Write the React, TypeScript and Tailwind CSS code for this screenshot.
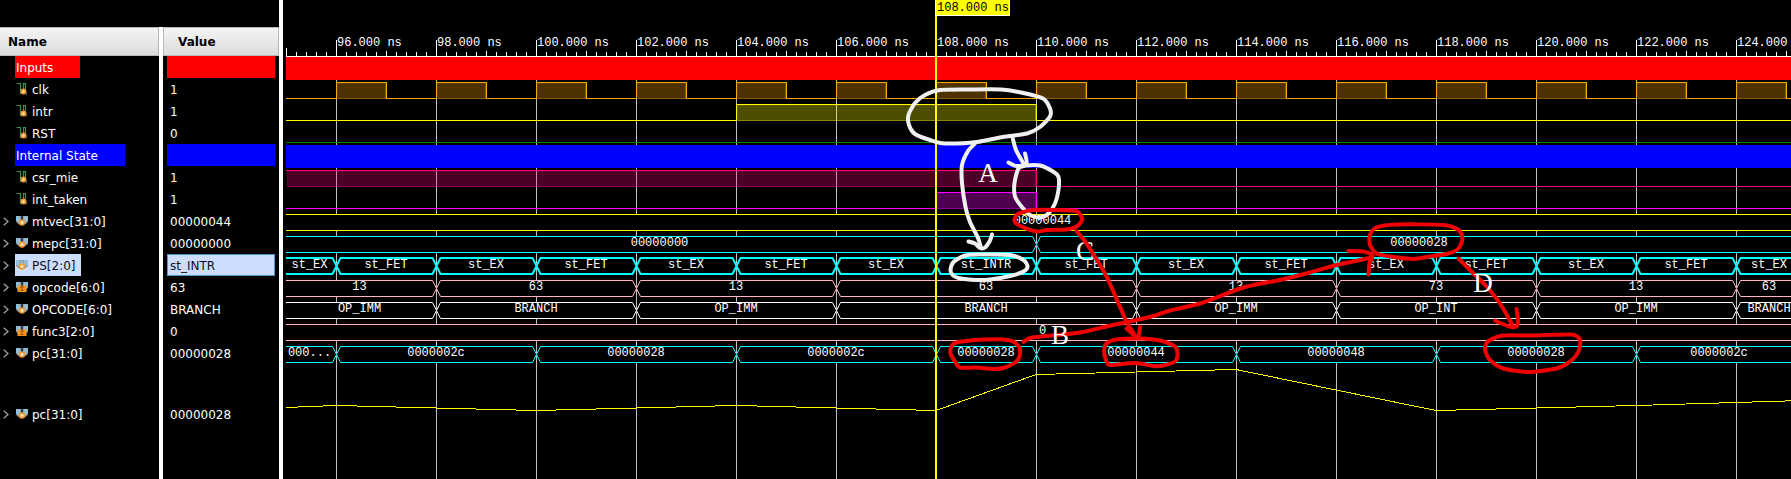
import React from "react";

type IconKind = "wire" | "bus" | "param" | "none";
type Signal = {
  name: string;
  value: string;
  icon: IconKind;
  band?: "red" | "blue";
  selected?: boolean;
  tall?: boolean;
};

const SIGNALS: Signal[] = [
  { name: "Inputs", value: "", icon: "none", band: "red" },
  { name: "clk", value: "1", icon: "wire" },
  { name: "intr", value: "1", icon: "wire" },
  { name: "RST", value: "0", icon: "wire" },
  { name: "Internal State", value: "", icon: "none", band: "blue" },
  { name: "csr_mie", value: "1", icon: "wire" },
  { name: "int_taken", value: "1", icon: "wire" },
  { name: "mtvec[31:0]", value: "00000044", icon: "bus" },
  { name: "mepc[31:0]", value: "00000000", icon: "bus" },
  { name: "PS[2:0]", value: "st_INTR", icon: "bus", selected: true },
  { name: "opcode[6:0]", value: "63", icon: "param" },
  { name: "OPCODE[6:0]", value: "BRANCH", icon: "bus" },
  { name: "func3[2:0]", value: "0", icon: "param" },
  { name: "pc[31:0]", value: "00000028", icon: "bus" },
  { name: "pc[31:0]", value: "00000028", icon: "bus", tall: true },
];

function SignalIcon({ kind }: { kind: IconKind }) {
  if (kind === "none") return null;
  if (kind === "wire") {
    return (
      <svg className="h-3 w-3 shrink-0" viewBox="0 0 12 12" aria-hidden="true">
        <path d="M0.5 0.5H4.5V10.5H6M7.5 6V0.5H9.5V6" fill="none" stroke="#3b9048" strokeWidth="1.2" />
        <circle cx="7.5" cy="8.5" r="3" fill="#f0962d" />
        <path d="M7.5 7L9 8.5L7.5 10L6 8.5Z" fill="#fff0d0" />
        <path d="M10.5 8V11.5" stroke="#5b5b5b" />
      </svg>
    );
  }
  return (
    <svg className="h-3 w-3 shrink-0" viewBox="0 0 12 12" aria-hidden="true">
      <path d="M0 1H5V5L3.5 8.5H2L0 6Z" fill="#93bdd3" />
      <path d="M7 1H12V6L10 8.5H8.5L7 5Z" fill="#93bdd3" />
      <path d="M0 6L2 8.5H4M12 6L10 8.5H8M5 1V4M7 1V4" stroke="#6d7f89" fill="none" />
      {kind === "bus" ? (
        <>
          <circle cx="6" cy="7.5" r="3.3" fill="#f0962d" />
          <path d="M6 5.5L8 7.5L6 9.5L4 7.5Z" fill="#ffe2b8" />
        </>
      ) : (
        <>
          <path d="M1.5 4.5H10.5V11H1.5Z" fill="#f7941d" />
          <path d="M4 6H8M6 6V9.5M4.5 9.5H7.5" stroke="#8f520a" fill="none" />
        </>
      )}
    </svg>
  );
}

function Chevron() {
  return (
    <svg className="h-[9px] w-[6px]" viewBox="0 0 6 9" aria-hidden="true">
      <path d="M0.7 0.7L5 4.5L0.7 8.3" fill="none" stroke="#a0a0a0" strokeWidth="1.3" />
    </svg>
  );
}

function SignalRow({ s }: { s: Signal }) {
  const height = s.tall ? "h-[100px]" : "h-[22px]";
  let chip = "text-white";
  let value = "text-white border-transparent";
  if (s.band === "red") {
    chip = "bg-[#ff0000] text-white pr-[27px]";
    value = "bg-[#ff0000] border-[#ff0000]";
  } else if (s.band === "blue") {
    chip = "bg-[#0000ff] text-white pr-[27px]";
    value = "bg-[#0000ff] border-[#0000ff]";
  } else if (s.selected) {
    chip = "bg-[#cdddfd] text-[#101020] pr-[5px]";
    value = "bg-[#cdddfd] text-[#101020] border-[#4a94cf]";
  }
  return (
    <tr className={height}>
      <td className="border-r-4 border-white p-0">
        <div className="flex items-center">
          <div className="flex w-[15px] shrink-0 pl-[3px]">
            {(s.icon === "bus" || s.icon === "param") && (
              <button type="button" className="flex" aria-label={"Expand " + s.name}>
                <Chevron />
              </button>
            )}
          </div>
          <div className={"flex h-[22px] items-center gap-1 pl-px whitespace-nowrap " + chip}>
            <SignalIcon kind={s.icon} />
            <span className="pt-[2px]">{s.name}</span>
          </div>
        </div>
      </td>
      <td className="p-0">
        <div className={"mx-1 flex h-[22px] items-center border pt-[2px] pl-[2px] " + value}>{s.value}</div>
      </td>
    </tr>
  );
}

/* ---- Waveform geometry ---- */

const START = 3;
const END = 1519;
const px = (ns: number) => 53 + (ns - 96) * 50;

const GRID = Array.from({ length: 15 }, (_, i) => 96 + i * 2);
const TICKS = Array.from({ length: 151 }, (_, i) => i);

type Level = { color: string; top: number; high: [number, number][] };

const CLOCK: [number, number][] = GRID.map((t) => [px(t), px(t + 1)]);

const LEVELS: Level[] = [
  { color: "#ffa500", top: 82, high: CLOCK },
  { color: "#ffff00", top: 104, high: [[px(104), px(110)]] },
  { color: "#008000", top: 126, high: [] },
  { color: "#ff0080", top: 170, high: [[START, px(110)]] },
  { color: "#ff00ff", top: 192, high: [[px(108), px(110)]] },
];

function LevelWave({ color, top, high }: Level) {
  const hi = top + 0.5;
  const lo = top + 16.5;
  let d = "M" + START + " " + (high.length && high[0][0] === START ? hi : lo);
  high.forEach(([a, b]) => {
    if (a !== START) d += "H" + (a + 0.5) + "V" + hi;
    d += "H" + (b + 0.5) + "V" + lo;
  });
  d += "H" + END;
  return (
    <g shapeRendering="crispEdges">
      {high.map(([a, b]) => (
        <rect
          key={a}
          x={a + 1.5}
          y={top + 1.5}
          width={b - a - 2}
          height={15}
          fill={color}
          fillOpacity={0.3}
          stroke={color}
          strokeOpacity={0.35}
        />
      ))}
      <path d={d} fill="none" stroke={color} />
    </g>
  );
}

type Bus = { color: string; top: number; thick?: boolean; marks: number[]; labels: string[] };

const BUSES: Bus[] = [
  { color: "#ffff00", top: 214, marks: [], labels: ["00000044"] },
  { color: "#00ffff", top: 236, marks: [110], labels: ["00000000", "00000028"] },
  {
    color: "#00ffff",
    top: 258,
    thick: true,
    marks: [96, 98, 100, 102, 104, 106, 108, 110, 112, 114, 116, 118, 120, 122, 124],
    labels: [
      "st_EX", "st_FET", "st_EX", "st_FET", "st_EX", "st_FET", "st_EX", "st_INTR",
      "st_FET", "st_EX", "st_FET", "st_EX", "st_FET", "st_EX", "st_FET", "st_EX",
    ],
  },
  {
    color: "#ffb6c1",
    top: 280,
    marks: [98, 102, 106, 112, 116, 120, 124],
    labels: ["13", "63", "13", "63", "13", "73", "13", "63"],
  },
  {
    color: "#ffffff",
    top: 302,
    marks: [98, 102, 106, 112, 116, 120, 124],
    labels: ["OP_IMM", "BRANCH", "OP_IMM", "BRANCH", "OP_IMM", "OP_INT", "OP_IMM", "BRANCH"],
  },
  { color: "#ffb6c1", top: 324, marks: [], labels: ["0"] },
  {
    color: "#00ffff",
    top: 346,
    marks: [96, 100, 104, 108, 110, 114, 118, 122],
    labels: [
      "000...", "0000002c", "00000028", "0000002c", "00000028", "00000044", "00000048", "00000028", "0000002c",
    ],
  },
];

function BusWave({ color, top, thick, marks, labels }: Bus) {
  const off = thick ? 0 : 0.5;
  const hi = top + off;
  const lo = top + 16 + off;
  const mid = (hi + lo) / 2;
  const edges = [0, ...marks.map(px), END];
  return (
    <g>
      {labels.map((label, i) => {
        const a = edges[i];
        const b = edges[i + 1];
        const ax = i === 0 ? START : a + 0.5;
        const bx = b + 0.5;
        const left = i === 0 ? `M${ax} ${hi}` : `M${ax} ${mid}L${ax + 4} ${hi}`;
        const back = i === 0 ? `L${ax} ${lo}` : `L${ax + 4} ${lo}L${ax} ${mid}`;
        return (
          <g key={i}>
            <path
              d={`${left}L${bx - 4} ${hi}L${bx} ${mid}L${bx - 4} ${lo}${back}`}
              fill="#000000"
              stroke={color}
              strokeWidth={thick ? 2 : 1}
            />
            <text x={(a + b) / 2} y={top + 10} textAnchor="middle" fill="#ffffff">
              {label}
            </text>
          </g>
        );
      })}
    </g>
  );
}

const ANALOG = "3,407.5 53,405.5 253,410.5 453,405.5 653,410.5 753,374.5 953,369.5 1153,410.5 1353,405.5 1519,400.5";

/* ---- Hand-drawn annotations, in window coordinates ---- */

type Stroke = { pts: number[]; closed?: boolean };

const WHITE_STROKES: Stroke[] = [
  {
    closed: true,
    pts: [940, 90, 970, 89.5, 1001, 89.5, 1021, 92.5, 1043, 98.5, 1050, 108.5, 1050, 116.5, 1040, 127, 1027, 133.5, 1000, 137.5, 977, 142, 945, 143.5, 930, 140, 915, 134, 909, 125, 908.5, 115, 915, 103, 925, 95],
  },
  { pts: [975, 143.5, 968, 151, 962, 165, 962, 183, 965.5, 207, 970, 222, 978, 238, 981, 248] },
  { pts: [968.5, 241.5, 975, 243.5, 980, 248, 985, 247.5, 990, 240.5, 992, 234.5] },
  { pts: [1012.5, 137.5, 1016, 150, 1023.5, 163.5] },
  { pts: [1008.5, 162.5, 1016.5, 166, 1026.5, 164, 1025, 153.5] },
  {
    closed: true,
    pts: [1018.5, 168.5, 1026.5, 165.5, 1040, 165.5, 1053, 171.5, 1058.5, 177, 1058.5, 190, 1055, 203.5, 1048.5, 213.5, 1040, 217.5, 1030, 215, 1021.5, 206.5, 1015, 196.5, 1014.5, 183],
  },
  {
    closed: true,
    pts: [958.5, 278, 952.5, 275, 950.5, 269.5, 954, 261.5, 965, 255.5, 980, 254.5, 1010, 255, 1023.5, 260, 1027.5, 266.5, 1023.5, 271.5, 1010, 276, 990, 279.5, 976.5, 280],
  },
];

const RED_STROKES: Stroke[] = [
  {
    closed: true,
    pts: [1021.5, 212.5, 1033.5, 210, 1073.5, 210.5, 1080.5, 215, 1082, 220.5, 1076.5, 226.5, 1066.5, 229.5, 1046.5, 230, 1036.5, 231.5, 1021.5, 226.5, 1014.5, 221.5, 1016.5, 215],
  },
  { pts: [1076.5, 231, 1086.5, 243.5, 1106.5, 276.5, 1126.5, 321.5, 1136, 337] },
  { pts: [1126.5, 328.5, 1135, 336, 1138.5, 336, 1140, 327] },
  {
    pts: [1023.5, 342, 1030, 338, 1046.5, 336, 1080, 332.5, 1113, 325, 1150, 317, 1170, 310.5, 1200, 303.5, 1243.5, 287.5, 1280, 280, 1310, 272.5, 1336.5, 265, 1371.5, 257.5],
  },
  { pts: [1348.5, 251, 1363.5, 251.5, 1372.5, 255.5, 1369.5, 263, 1368.5, 274.5] },
  {
    closed: true,
    pts: [1376.5, 227.5, 1396.5, 224.5, 1443.5, 225, 1458.5, 230, 1462.5, 238.5, 1458.5, 248.5, 1448.5, 253.5, 1430, 256.5, 1413.5, 259, 1390, 256.5, 1376.5, 253.5, 1370, 245, 1370, 235],
  },
  {
    closed: true,
    pts: [951.5, 346.5, 956.5, 342.5, 983.5, 339.5, 1008.5, 340, 1018.5, 346, 1020, 353.5, 1016.5, 361.5, 1005, 367.5, 993.5, 369, 976.5, 367.5, 960, 367.5, 955, 361.5, 950.5, 353.5],
  },
  {
    closed: true,
    pts: [1106.5, 343.5, 1116.5, 339.5, 1140, 338.5, 1160, 340.5, 1175, 346.5, 1177.5, 355, 1175, 361.5, 1163, 365.5, 1153.5, 366, 1135, 363, 1110, 365, 1106, 360, 1104, 351.5],
  },
  { pts: [1458.5, 258.5, 1473.5, 273.5, 1486.5, 286.5, 1500, 303.5, 1512.5, 325] },
  { pts: [1495, 320.5, 1505, 325, 1511.5, 327, 1516.5, 326.5, 1518, 320, 1516.5, 309] },
  {
    closed: true,
    pts: [1490, 340, 1503.5, 335.5, 1533.5, 335.5, 1571.5, 334.5, 1580, 340, 1578.5, 351.5, 1570, 361.5, 1556.5, 368.5, 1528.5, 372, 1503.5, 368.5, 1490, 360, 1485.5, 351.5, 1485.5, 345],
  },
];

function smooth({ pts, closed }: Stroke) {
  const n = pts.length / 2;
  const at = (i: number) => {
    const k = closed ? (i + n) % n : Math.max(0, Math.min(n - 1, i));
    return [pts[k * 2], pts[k * 2 + 1]];
  };
  let d = "M" + at(0).join(" ");
  const count = closed ? n : n - 1;
  for (let i = 0; i < count; i++) {
    const [p0, p1, p2, p3] = [at(i - 1), at(i), at(i + 1), at(i + 2)];
    d += `C${p1[0] + (p2[0] - p0[0]) / 8} ${p1[1] + (p2[1] - p0[1]) / 8} ${p2[0] - (p3[0] - p1[0]) / 8} ${p2[1] - (p3[1] - p1[1]) / 8} ${p2[0]} ${p2[1]}`;
  }
  return d;
}

function Annotations() {
  return (
    <g transform="translate(-283 0)" fill="none" strokeWidth="4" strokeLinecap="round" strokeLinejoin="round">
      <g fill="#ffffff" className="font-['Liberation_Serif',serif] text-[27px]" textAnchor="middle">
        <text x="1085" y="260">C</text>
      </g>
      <g stroke="#f0f0f0">
        {WHITE_STROKES.map((s, i) => (
          <path key={i} d={smooth(s)} />
        ))}
      </g>
      <g stroke="#f00000">
        {RED_STROKES.map((s, i) => (
          <path key={i} d={smooth(s)} />
        ))}
      </g>
      <g fill="#ffffff" className="font-['Liberation_Serif',serif] text-[27px]" textAnchor="middle">
        <text x="988" y="182">A</text>
        <text x="1060" y="344">B</text>
        <text x="1483" y="292">D</text>
      </g>
    </g>
  );
}

function Waveform() {
  return (
    <svg
      className="block h-[479px] w-full font-['Liberation_Mono',monospace] text-[12px]"
      role="img"
      aria-label="Signal waveforms from 95 ns to 125 ns"
    >
      <g stroke="#c0c0c0" shapeRendering="crispEdges">
        {GRID.map((t) => (
          <line key={t} x1={px(t) + 0.5} x2={px(t) + 0.5} y1="57" y2="100%" />
        ))}
      </g>
      <g stroke="#ffffff" shapeRendering="crispEdges">
        <path d={`M${START + 0.5} 48V56.5H${END}`} fill="none" />
        {TICKS.map((i) => {
          const x = 3 + i * 10;
          const k = i % 10;
          const y = k === 5 ? 40 : k === 0 ? 51 : 52;
          return i === 0 ? null : <line key={i} x1={x + 0.5} x2={x + 0.5} y1={y} y2="57" />;
        })}
      </g>
      <g fill="#ffffff">
        {GRID.map((t) => (
          <text key={t} x={px(t) + 1} y="46">
            {t + ".000 ns"}
          </text>
        ))}
      </g>
      <rect x={START} y="57" width="100%" height="23" fill="#ff0000" />
      <rect x={START} y="145" width="100%" height="23" fill="#0000ff" />
      {LEVELS.map((l) => (
        <LevelWave key={l.top} {...l} />
      ))}
      {BUSES.map((b) => (
        <BusWave key={b.top} {...b} />
      ))}
      <polyline points={ANALOG} fill="none" stroke="#ffff00" shapeRendering="crispEdges" />
      <rect x="652" y="0" width="2" height="100%" fill="#ffff00" />
      <rect x="652.5" y="-1" width="74" height="16.5" fill="#ffff00" stroke="#ffffff" />
      <text x="654" y="11" fill="#000000">
        108.000 ns
      </text>
      <Annotations />
    </svg>
  );
}

export default function App() {
  return (
    <main className="flex min-h-screen bg-black">
      <section className="flex w-[283px] shrink-0 flex-col border-r-4 border-white pt-[27px] font-['DejaVu_Sans',sans-serif] text-[12px] leading-4">
        <table className="w-full table-fixed border-separate border-spacing-0">
          <colgroup>
            <col className="w-[163px]" />
            <col />
          </colgroup>
          <thead>
            <tr className="h-[29px] text-left font-bold text-black">
              <th className="border-r-4 border-white p-0">
                <div className="flex h-[29px] items-center border border-l-0 border-[#b8b8b8] bg-linear-to-b from-[#f4f4f4] to-[#dcdcde] pl-2">
                  Name
                </div>
              </th>
              <th className="p-0">
                <div className="flex h-[29px] items-center border border-[#b8b8b8] bg-linear-to-b from-[#f4f4f4] to-[#dcdcde] pl-[14px]">
                  Value
                </div>
              </th>
            </tr>
          </thead>
          <tbody>
            {SIGNALS.map((s, i) => (
              <SignalRow key={i} s={s} />
            ))}
            <tr className="h-[15px]">
              <td className="border-r-4 border-white p-0" />
              <td className="p-0" />
            </tr>
          </tbody>
        </table>
      </section>
      <section className="min-w-0 flex-1 overflow-hidden">
        <Waveform />
      </section>
    </main>
  );
}
